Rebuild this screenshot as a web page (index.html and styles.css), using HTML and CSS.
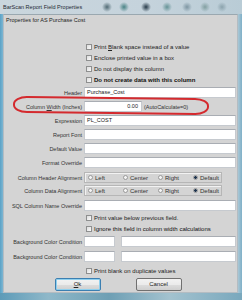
FILE: index.html
```html
<!DOCTYPE html>
<html>
<head>
<meta charset="utf-8">
<link rel="stylesheet" href="styles.css">
</head>
<body>
<div class="window">
  <div class="titlebar">
    <span class="title">BarScan Report Field Properties</span>
  </div>
  <div class="dialog">
    <div class="caption">Properties for AS Purchase Cost</div>

    <div class="checks">
      <div class="check"><span class="box"></span><span>Print <u>B</u>lank space instead of a value</span></div>
      <div class="check"><span class="box"></span><span>Enclose printed value in a box</span></div>
      <div class="check"><span class="box"></span><span>Do not display this column</span></div>
      <div class="check bold"><span class="box"></span><span>Do not create data with this column</span></div>
    </div>

    <div class="row first"><label>Header</label><div class="field">Purchase_Cost</div></div>
    <div class="row"><label>Column <u>W</u>idth (Inches)</label>
      <div class="inline"><div class="field num">0.00</div><span class="note">(AutoCalculate=0)</span></div>
    </div>
    <div class="row"><label>Expression</label><div class="field">PL_COST</div></div>
    <div class="row"><label>Report Font</label><div class="field"></div></div>
    <div class="row"><label>Default Value</label><div class="field"></div></div>
    <div class="row"><label>Format Override</label><div class="field"></div></div>

    <div class="row align first-align"><label>Column Header Alignment</label>
      <div class="radios">
        <span class="radio"><i></i>Left</span>
        <span class="radio"><i></i>Center</span>
        <span class="radio"><i></i>Right</span>
        <span class="radio on"><i></i>Default</span>
      </div>
    </div>
    <div class="row align second-align"><label>Column Data Alignment</label>
      <div class="radios">
        <span class="radio"><i></i>Left</span>
        <span class="radio"><i></i>Center</span>
        <span class="radio"><i></i>Right</span>
        <span class="radio on"><i></i>Default</span>
      </div>
    </div>

    <div class="row sql"><label>SQL Column Name Override</label><div class="field"></div></div>

    <div class="check solo c1"><span class="box"></span><span>Print value below previous field.</span></div>
    <div class="check solo dark"><span class="box"></span><span>Ignore this field in column width calculations</span></div>

    <div class="row bg b1"><label>Background Color Condition</label>
      <div class="pair"><div class="field small"></div><div class="field"></div></div>
    </div>
    <div class="row bg b2"><label>Background Color Condition</label>
      <div class="pair"><div class="field small"></div><div class="field"></div></div>
    </div>

    <div class="check solo c3"><span class="box"></span><span>Print blank on duplicate values</span></div>

    <div class="buttons">
      <div class="btn default"><u>O</u>k</div>
      <div class="btn">Cancel</div>
    </div>
  </div>
  <div class="bottomframe"></div>
  <div class="highlight"></div>
</div>
</body>
</html>
```

FILE: styles.css
```css
* { box-sizing: border-box; }
html, body { margin: 0; padding: 0; }
body {
  width: 242px;
  height: 300px;
  overflow: hidden;
  font-family: "Liberation Sans", Arial, sans-serif;
  color: #2a2a2a;
  background: #6faecd;
}
.window {
  position: relative;
  width: 242px;
  height: 300px;
  display: flex;
  flex-direction: column;
  background: linear-gradient(90deg, #5aa2c6 0px, #7db6d2 3px, #9fc3d4 50%, #a9c7d5 238px, #7fb0c8 242px);
}
.titlebar {
  height: 14px;
  flex: none;
  padding-left: 3px;
  display: flex;
  align-items: center;
  font-size: 5.5px;
  color: #1e2a33;
  background:
    radial-gradient(circle at 107px 7px, rgba(40,70,80,.75) 0, rgba(40,70,80,0) 5px),
    radial-gradient(circle at 124px 7px, rgba(40,110,110,.8) 0, rgba(40,110,110,0) 5px),
    radial-gradient(circle at 146px 7px, rgba(20,40,55,.9) 0, rgba(20,40,55,0) 5px),
    radial-gradient(circle at 167px 7px, rgba(60,120,120,.7) 0, rgba(60,120,120,0) 5px),
    radial-gradient(circle at 187px 7px, rgba(80,110,125,.6) 0, rgba(80,110,125,0) 5px),
    radial-gradient(circle at 205px 7px, rgba(80,120,115,.55) 0, rgba(80,120,115,0) 5px),
    radial-gradient(circle at 222px 7px, rgba(90,120,130,.5) 0, rgba(90,120,130,0) 5px),
    linear-gradient(90deg, #cad6dd 0, #c5d3dc 60%, #b9ccd6 100%);
}
.title { white-space: nowrap; }
.dialog {
  flex: 1;
  margin: 0 4px 0 3px;
  background: #d4d4d4;
  border: 1px solid #b4bcc2;
  border-top-color: #9aa8b0;
  display: flex;
  flex-direction: column;
  padding: 0 1px 0 0;
}
.bottomframe {
  height: 7px;
  flex: none;
  background: linear-gradient(90deg, #5d9bb8, #8fb8c9 20%, #6e9fb4 45%, #a3c2cf 70%, #79a8bd 100%);
}
.caption {
  margin-top: 1px;
  height: 8px;
  line-height: 8px;
  padding-left: 2px;
  font-size: 5.5px;
  color: #222;
}
.checks { margin-top: 17px; }
.check {
  height: 11px;
  display: flex;
  align-items: center;
  padding-left: 82px;
  font-size: 6px;
  color: #222;
  white-space: nowrap;
}
.check.bold { font-weight: bold; color: #111; }
.check.dark { color: #111; }
.box {
  width: 6px;
  height: 6px;
  margin-right: 1px;
  border: 1px solid #8e8f8f;
  background: linear-gradient(135deg, #dcdcdc, #fbfbfb);
  flex: none;
  margin-right: 2px;
}
.row {
  display: grid;
  grid-template-columns: 78px 1fr;
  column-gap: 2px;
  align-items: center;
  height: 11px;
  margin-top: 3px;
}
.row.first { margin-top: 2px; }
.row label {
  text-align: right;
  font-size: 5.5px;
  color: #333;
  white-space: nowrap;
}
.field {
  height: 11px;
  background: #fff;
  border: 1px solid #c6cacf;
  border-top-color: #a9adb3;
  font-size: 5.5px;
  line-height: 9px;
  padding-left: 2px;
  color: #222;
  white-space: nowrap;
}
.inline { display: flex; align-items: center; }
.field.num {
  width: 58px;
  text-align: right;
  padding-right: 3px;
}
.note {
  font-size: 5.5px;
  margin-left: 2px;
  color: #333;
}
.row.align { margin-top: 2px; }
.row.first-align { margin-top: 4px; }
.radios {
  width: 138px;
  height: 11px;
  border: 1px solid #b6b6b6;
  box-shadow: inset 1px 1px 0 #f2f2f2;
  display: grid;
  grid-template-columns: repeat(4, 35px);
  padding-left: 3px;
  align-items: center;
}
.radio {
  display: flex;
  align-items: center;
  font-size: 6px;
  color: #333;
  white-space: nowrap;
}
.radio i {
  width: 5px;
  height: 5px;
  border-radius: 50%;
  border: 1px solid #9a9a9a;
  background: #f4f4f4;
  margin-right: 2px;
  flex: none;
  position: relative;
}
.radio.on i {
  background: radial-gradient(circle, #1f3550 0 1.3px, #f4f4f4 1.6px);
}
.row.sql { margin-top: 4px; }
.check.solo.c1 { margin-top: 1px; }
.row.bg.b1 { margin-top: 2px; }
.row.bg.b2 { margin-top: 4px; }
.pair {
  display: grid;
  grid-template-columns: 31px 1fr;
  column-gap: 6px;
}
.check.solo.c3 { margin-top: 3px; }
.buttons {
  margin-top: 2px;
  display: flex;
  justify-content: center;
  gap: 35px;
  padding-right: 4px;
}
.btn {
  width: 46px;
  height: 13px;
  border: 1px solid #707070;
  border-radius: 2px;
  background: linear-gradient(#f2f2f2 0, #ebebeb 50%, #dddddd 51%, #cfcfcf 100%);
  font-size: 6px;
  line-height: 11px;
  text-align: center;
  color: #222;
}
.btn.default {
  border-color: #3c7fb1;
  box-shadow: inset 0 0 0 1px #8fd0ee;
}
.highlight {
  position: absolute;
  left: 13px;
  top: 97px;
  width: 196px;
  height: 17px;
  border: 2px solid #d42a2e;
  border-radius: 14px / 8px;
  transform: rotate(0.6deg);
}
```
